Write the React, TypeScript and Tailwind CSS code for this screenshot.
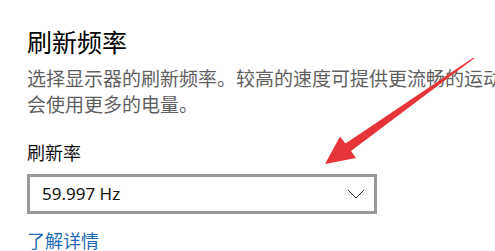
export default function App() {
  return (
    <div className="relative h-[251px] w-[495px] overflow-hidden bg-white font-['Noto_Sans_CJK_SC','Noto_Sans',sans-serif]">
      <div className="flex flex-col pl-[27px] pt-[24px]">
        <h1 className="text-[25px] leading-[34px] text-black">刷新频率</h1>
        <p className="mt-[7px] w-[540px] text-[19px] leading-[26px] text-[#5f5f5f]">
          选择显示器的刷新频率。较高的速度可提供更流畅的运动，但也会使用更多的电量。
        </p>
        <div className="mt-[24px] text-[18px] leading-[22px] text-[#111]">刷新率</div>
        <button className="mt-[11px] flex h-[40px] w-[350px] items-center justify-between border-[3px] border-[#999] bg-white pl-[12px] pr-[9px] text-left">
          <span className="font-['Noto_Sans',sans-serif] text-[17px] text-[#111]">59.997 Hz</span>
          <svg width="18" height="10" viewBox="0 0 18 10">
            <path d="M1 1 L9 9 L17 1" fill="none" stroke="#333" strokeWidth="1" />
          </svg>
        </button>
        <a className="mt-[14px] text-[18px] leading-[24px] text-[#1b6ab3]">了解详情</a>
      </div>
      <svg className="pointer-events-none absolute left-0 top-0" width="495" height="251" viewBox="0 0 495 251">
        <polygon
          points="473.5,57.5 474,58.6 351,151 356,158 325,164 340,136.5 345.5,143.5"
          fill="#e63538"
        />
      </svg>
    </div>
  );
}
